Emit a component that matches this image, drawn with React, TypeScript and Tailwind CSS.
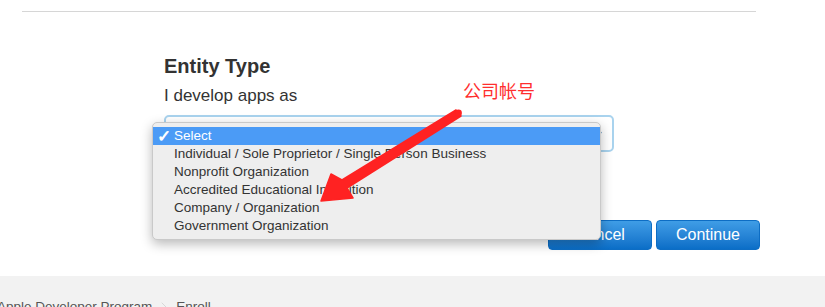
import { ChevronDown, ChevronRight } from "lucide-react"

const entityTypes = [
  "Individual / Sole Proprietor / Single Person Business",
  "Nonprofit Organization",
  "Accredited Educational Institution",
  "Company / Organization",
  "Government Organization",
]

function Annotation() {
  // red skitch-style arrow + label drawn over the form
  return (
    <div className="pointer-events-none absolute inset-0 z-20">
      <span
        className="absolute left-[463px] top-[78px] text-[18px] leading-[24px] text-[#ff2e2e]"
        style={{ fontFamily: '"Noto Sans CJK SC", sans-serif' }}
      >
        公司帐号
      </span>
      <svg className="absolute left-0 top-0" width="825" height="307" viewBox="0 0 825 307">
        <polygon
          points="456,110 342,180 331,174 321,201 353,198 347,188 461,116"
          fill="#ff2222"
          stroke="#ff2222"
          strokeWidth="1.5"
          strokeLinejoin="round"
        />
        <circle cx="458.5" cy="113" r="3.4" fill="#ff2222" />
      </svg>
    </div>
  )
}

export default function App() {
  return (
    <div
      className="relative h-[307px] w-[825px] overflow-hidden bg-white text-[#333333]"
      style={{ fontFamily: '"Liberation Sans", Arial, sans-serif' }}
    >
      {/* top rule */}
      <div className="pt-[11px] pl-[22px]">
        <div className="h-px w-[734px] bg-[#d6d6d6]" />
      </div>

      <main className="pl-[164px] pt-[42px]">
        <h2 className="text-[20px] font-bold leading-[24px] text-[#333]">Entity Type</h2>
        <p className="mt-[7px] text-[17px] leading-[22px] text-[#333]">I develop apps as</p>

        <div className="relative mt-[8px] w-[450px]">
          <div className="flex h-[37px] items-center justify-end rounded-[5px] border-2 border-[#a9d3ee] bg-white pr-[8px]">
            <ChevronDown size={12} strokeWidth={3} className="text-[#5a8fb8]" />
          </div>

          {/* open native-style dropdown */}
          <ul className="absolute left-[-12px] top-[7px] z-10 w-[449px] rounded-[5px] border border-[#c9c9c9] bg-[#eeeeee] py-[4px] text-[13.5px] shadow-[0_4px_12px_rgba(0,0,0,0.28)]">
            <li className="flex h-[18px] items-center bg-[#4b9bf6] text-white">
              <span className="w-[21px] pl-[4px] text-[17px] font-bold leading-none">✓</span>
              <span>Select</span>
            </li>
            {entityTypes.map((t, i) => (
              <li key={i} className="flex h-[18px] items-center pl-[21px] text-[#333]">
                {t}
              </li>
            ))}
          </ul>
        </div>

        <div className="mt-[68px] flex w-[596px] justify-end gap-[4px]">
          <button className="h-[30px] w-[104px] rounded-[4px] border border-[#0d6dc4] bg-gradient-to-b from-[#3f9de6] to-[#0a6ec7] text-[16px] text-white">
            Cancel
          </button>
          <button className="h-[30px] w-[104px] rounded-[4px] border border-[#0d6dc4] bg-gradient-to-b from-[#3f9de6] to-[#0a6ec7] text-[16px] text-white">
            Continue
          </button>
        </div>
      </main>

      <footer className="mt-[26px] h-[40px] bg-[#f2f2f2] pt-[22px]">
        <div className="ml-[-3px] flex items-center gap-[4px] text-[13.5px] leading-[18px] text-[#555]">
          <span>Apple Developer Program</span>
          <ChevronRight size={16} strokeWidth={1} className="text-[#c8c8c8]" />
          <span>Enroll</span>
        </div>
      </footer>

      <Annotation />
    </div>
  )
}
